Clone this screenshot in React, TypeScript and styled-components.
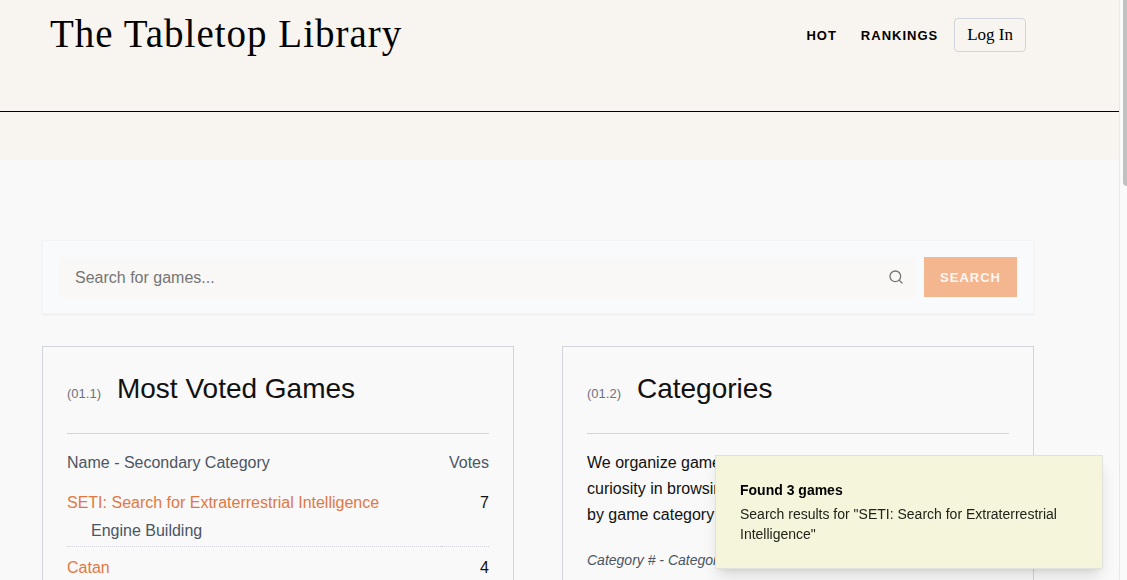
import React from "react";
import styled, { createGlobalStyle } from "styled-components";

const sans = `"Liberation Sans", Arial, Helvetica, sans-serif`;
const serif = `"Liberation Serif", "Times New Roman", serif`;

const GlobalStyle = createGlobalStyle`
  *, *::before, *::after { box-sizing: border-box; }
  html, body { margin: 0; padding: 0; background: #f9f9f9; }
  body { font-family: ${sans}; font-size: 16px; line-height: 24px; color: #111; }
  h1, h2, p { margin: 0; font-weight: 400; }
  a { text-decoration: none; color: inherit; }
`;

const Page = styled.div`
  display: flex;
  height: 100vh;
  overflow: hidden;
`;

const Content = styled.div`
  flex: 1;
  min-width: 0;
`;

const ScrollTrack = styled.div`
  width: 8px;
  flex: none;
  padding-left: 3px;
  border-left: 1px solid #e8e8e8;
  background: #fafafa;
`;

const ScrollThumb = styled.div`
  height: 32vh;
  background: #c1c1c1;
  border-radius: 0 0 0 4px;
`;

const Masthead = styled.div`
  background: #f8f4ef;
  padding-bottom: 48px;
`;

const Header = styled.header`
  display: flex;
  justify-content: space-between;
  align-items: flex-start;
  padding: 10px 93px 53px 50px;
  border-bottom: 1px solid #000;
`;

const Brand = styled.h1`
  font-family: ${serif};
  font-size: 39px;
  line-height: 48px;
  letter-spacing: 1px;
  color: #000;
`;

const Nav = styled.nav`
  display: flex;
  align-items: center;
  gap: 24px;
  padding-top: 8px;
`;

const NavLink = styled.a`
  padding-top: 2px;
  font-size: 13px;
  font-weight: 700;
  letter-spacing: 1px;
  color: #000;
`;

const LoginButton = styled.button`
  height: 34px;
  margin-left: -8px;
  padding: 0 12px;
  border: 1px solid #d1d5db;
  border-radius: 4px;
  background: transparent;
  font-family: ${serif};
  font-size: 17px;
  color: #000;
`;

const Main = styled.main`
  padding: 80px 85px 0 42px;
`;

const SearchForm = styled.form`
  display: flex;
  gap: 8px;
  padding: 16px;
  border: 1px solid #f3f4f6;
  background: #f9fafc;
  box-shadow: 0 1px 2px rgba(0, 0, 0, 0.06);
`;

const SearchField = styled.label`
  display: flex;
  flex: 1;
  align-items: center;
  height: 40px;
  padding: 0 12px 0 16px;
  background: #f9f8f6;
  color: #757575;
`;

const SearchInput = styled.input`
  flex: 1;
  min-width: 0;
  padding: 2px 0 0;
  border: 0;
  outline: 0;
  background: transparent;
  font: inherit;
  color: #111;
  &::placeholder { color: #757575; opacity: 1; }
`;

const SearchButton = styled.button`
  height: 40px;
  padding: 0 16px;
  border: 0;
  background: #f4b68f;
  font-family: ${sans};
  font-size: 13px;
  font-weight: 700;
  letter-spacing: 1px;
  color: #fdf8f4;
`;

const Columns = styled.div`
  display: grid;
  grid-template-columns: 1fr 1fr;
  gap: 48px;
  margin-top: 32px;
`;

const Card = styled.section`
  padding: 24px;
  border: 1px solid #d1d5db;
`;

const CardHead = styled.div`
  display: flex;
  align-items: baseline;
  gap: 16px;
  padding-bottom: 26px;
  border-bottom: 1px solid #d1d5db;
  margin-bottom: 16px;
`;

const CardNumber = styled.span`
  font-size: 13px;
  color: #6b7280;
`;

const CardTitle = styled.h2`
  font-size: 28px;
  line-height: 36px;
  color: #111;
`;

const VotesTable = styled.table`
  width: 100%;
  border-collapse: collapse;
`;

const HeadCell = styled.th<{ $end?: boolean }>`
  padding: 1px 0 7px;
  font-weight: 400;
  text-align: ${(p) => (p.$end ? "right" : "left")};
  color: #4b5563;
`;

const Cell = styled.td<{ $end?: boolean }>`
  padding: 9px 0 3px;
  border-bottom: 1px dotted #d1d5db;
  vertical-align: top;
  text-align: ${(p) => (p.$end ? "right" : "left")};
`;

const GameLink = styled.a`
  display: block;
  color: #e07845;
`;

const Genre = styled.div`
  padding: 4px 0 0 24px;
  color: #4b5563;
`;

const Intro = styled.p`
  line-height: 26px;
`;

const ListLabel = styled.p`
  margin-top: 20px;
  font-size: 14px;
  font-style: italic;
  color: #4b5563;
`;

const Toast = styled.div`
  position: fixed;
  right: 24px;
  bottom: 11px;
  width: 388px;
  padding: 24px;
  border: 1px solid #e0e2dc;
  background: #f5f5dc;
  box-shadow: 0 10px 15px -3px rgba(0, 0, 0, 0.12), 0 4px 6px -4px rgba(0, 0, 0, 0.12);
  font-size: 14px;
  line-height: 20px;
`;

const ToastTitle = styled.p`
  margin-bottom: 4px;
  font-weight: 700;
  color: #000;
`;

const ToastText = styled.p`
  color: #222219;
`;

const games = [
  { name: "SETI: Search for Extraterrestrial Intelligence", genre: "Engine Building", votes: 7 },
  { name: "Catan", genre: "Negotiation", votes: 4 },
];

const SearchIcon = () => (
  <svg width="16" height="16" viewBox="0 0 24 24" fill="none" stroke="currentColor" strokeWidth="2" strokeLinecap="round" aria-hidden="true">
    <circle cx="11" cy="11" r="8" />
    <path d="M21 21l-4.3-4.3" />
  </svg>
);

export default function App() {
  return (
    <>
      <GlobalStyle />
      <Page>
        <Content>
          <Masthead>
            <Header>
              <Brand>The Tabletop Library</Brand>
              <Nav>
                <NavLink href="#hot">HOT</NavLink>
                <NavLink href="#rankings">RANKINGS</NavLink>
                <LoginButton type="button">Log In</LoginButton>
              </Nav>
            </Header>
          </Masthead>
          <Main>
            <SearchForm role="search" onSubmit={(e) => e.preventDefault()}>
              <SearchField>
                <SearchInput type="text" aria-label="Search for games" placeholder="Search for games..." />
                <SearchIcon />
              </SearchField>
              <SearchButton type="submit">SEARCH</SearchButton>
            </SearchForm>
            <Columns>
              <Card>
                <CardHead>
                  <CardNumber>(01.1)</CardNumber>
                  <CardTitle>Most Voted Games</CardTitle>
                </CardHead>
                <VotesTable>
                  <thead>
                    <tr>
                      <HeadCell scope="col">Name - Secondary Category</HeadCell>
                      <HeadCell scope="col" $end>Votes</HeadCell>
                    </tr>
                  </thead>
                  <tbody>
                    {games.map((game) => (
                      <tr key={game.name}>
                        <Cell>
                          <GameLink href="#game">{game.name}</GameLink>
                          <Genre>{game.genre}</Genre>
                        </Cell>
                        <Cell $end>{game.votes}</Cell>
                      </tr>
                    ))}
                  </tbody>
                </VotesTable>
              </Card>
              <Card>
                <CardHead>
                  <CardNumber>(01.2)</CardNumber>
                  <CardTitle>Categories</CardTitle>
                </CardHead>
                <Intro>
                  We organize games to encourage<br />
                  curiosity in browsing. Explore<br />
                  by game category or theme.
                </Intro>
                <ListLabel>Category # - Category Name</ListLabel>
              </Card>
            </Columns>
          </Main>
        </Content>
        <ScrollTrack>
          <ScrollThumb />
        </ScrollTrack>
      </Page>
      <Toast role="status">
        <ToastTitle>Found 3 games</ToastTitle>
        <ToastText>Search results for "SETI: Search for Extraterrestrial Intelligence"</ToastText>
      </Toast>
    </>
  );
}
